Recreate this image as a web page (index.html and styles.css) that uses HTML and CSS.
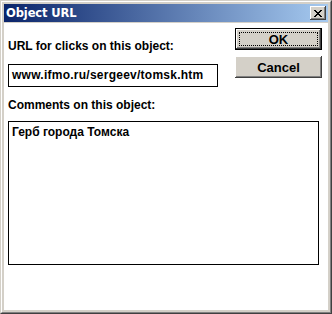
FILE: index.html
```html
<!DOCTYPE html>
<html>
<head>
<meta charset="utf-8">
<link rel="stylesheet" href="styles.css">
</head>
<body>
<div class="window">
  <div class="frame">
    <div class="titlebar">
      <span class="title">Object URL</span>
      <button class="close" aria-label="Close">
        <svg width="8" height="7" viewBox="0 0 8 7"><path d="M0 0h2v1h1v1h2V1h1V0h2v1H7v1H6v1H5v1h1v1h1v1h1v1H6V6H5V5H3v1H2v1H0V6h1V5h1V4h1V3H2V2H1V1H0z" fill="#000"/></svg>
      </button>
    </div>
    <div class="client">
      <div class="toprow">
        <div class="urlcol">
          <div class="label">URL for clicks on this object:</div>
          <div class="field url">www.ifmo.ru/sergeev/tomsk.htm</div>
        </div>
        <div class="buttons">
          <button class="btn default"><span class="focus">OK</span></button>
          <button class="btn">Cancel</button>
        </div>
      </div>
      <div class="label comments-label">Comments on this object:</div>
      <div class="field memo">Герб города Томска</div>
    </div>
  </div>
</div>
</body>
</html>
```
FILE: styles.css
```css
html, body {
  margin: 0;
  padding: 0;
  background: #d4d0c8;
}
.window {
  width: 332px;
  height: 314px;
  box-sizing: border-box;
  border-top: 1px solid #d4d0c8;
  border-left: 1px solid #d4d0c8;
  border-right: 1px solid #404040;
  border-bottom: 1px solid #404040;
}
.frame {
  height: 100%;
  box-sizing: border-box;
  border-top: 1px solid #ffffff;
  border-left: 1px solid #ffffff;
  border-right: 1px solid #808080;
  border-bottom: 1px solid #808080;
  padding: 2px;
  background: #d4d0c8;
  display: flex;
  flex-direction: column;
}
.titlebar {
  height: 18px;
  flex: none;
  background: linear-gradient(to right, #0a246a, #a6caf0);
  display: flex;
  align-items: center;
  justify-content: space-between;
  padding: 0 2px 0 2px;
}
.title {
  font-family: "DejaVu Sans", Tahoma, sans-serif;
  font-weight: bold;
  font-size: 11.5px;
  color: #fff;
  letter-spacing: -0.1px;
}
.close {
  width: 16px;
  height: 14px;
  padding: 0;
  margin: 0;
  background: #d4d0c8;
  border: 0;
  box-shadow: inset -1px -1px #404040, inset 1px 1px #ffffff, inset -2px -2px #808080, inset 2px 2px #d4d0c8;
  display: flex;
  align-items: center;
  justify-content: center;
}
.close svg { display: block; margin-left: -1px; }
.client {
  margin-top: 1px;
  flex: 1;
  background: #ffffff;
  padding: 0 4px;
  font-family: "Liberation Sans", Arial, sans-serif;
  font-weight: bold;
  font-size: 12px;
  color: #000;
}
.toprow {
  display: flex;
  justify-content: space-between;
}
.urlcol {
  padding-top: 16px;
}
.label {
  line-height: 14px;
  height: 14px;
  white-space: nowrap;
}
.field {
  border: 1px solid #000;
  box-sizing: border-box;
  background: #fff;
  line-height: 14px;
  padding: 3px 3px;
  white-space: nowrap;
}
.url {
  margin-top: 11px;
  width: 210px;
  height: 23px;
  letter-spacing: 0.25px;
}
.buttons {
  padding-top: 5px;
  padding-right: 2px;
  display: flex;
  flex-direction: column;
  gap: 6px;
}
.btn {
  width: 87px;
  height: 22px;
  padding: 0;
  margin: 0;
  border: 0;
  background: #d4d0c8;
  font-family: "Liberation Sans", Arial, sans-serif;
  font-weight: bold;
  font-size: 13px;
  color: #000;
  box-shadow: inset -1px -1px #404040, inset 1px 1px #ffffff, inset -2px -2px #808080, inset 2px 2px #d4d0c8;
  display: flex;
  align-items: center;
  justify-content: center;
}
.btn.default {
  box-shadow: inset 0 0 0 1px #000, inset -2px -2px #404040, inset 2px 2px #ffffff, inset -3px -3px #808080;
  padding: 4px;
}
.focus {
  flex: 1;
  align-self: stretch;
  border: 1px dotted #000;
  display: flex;
  align-items: center;
  justify-content: center;
}
.comments-label {
  margin-top: 11px;
}
.memo {
  margin-top: 9px;
  width: 311px;
  height: 144px;
  padding: 3px;
}
```
